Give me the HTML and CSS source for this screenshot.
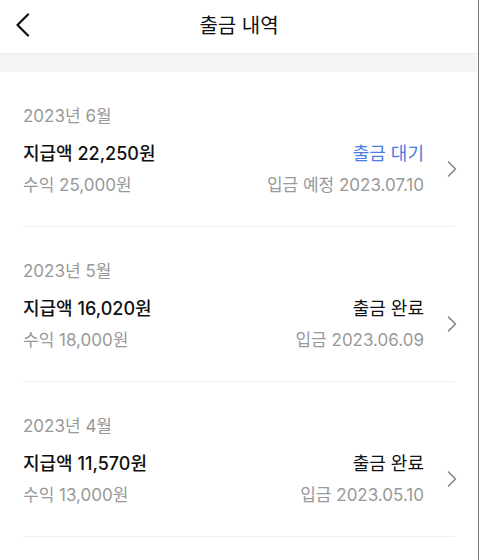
FILE: index.html
```html
<!DOCTYPE html>
<html lang="ko">
<head>
<meta charset="utf-8">
<title>출금 내역</title>
<link rel="stylesheet" href="styles.css">
</head>
<body>
<div class="app">
  <header class="topbar">
    <button class="back" aria-label="뒤로">
      <svg width="16" height="24" viewBox="0 0 16 24"><path d="M13 1.5 L2.5 12 L13 22.5" fill="none" stroke="#111" stroke-width="2.2" stroke-linecap="round" stroke-linejoin="round"/></svg>
    </button>
    <h1 class="title">출금 내역</h1>
  </header>
  <div class="band"></div>
  <ul class="list">
    <li class="item">
      <div class="month">2023년 6월</div>
      <div class="body">
        <div class="cols">
          <div class="row"><span class="amount">지급액 22,250원</span><span class="status pending">출금 대기</span></div>
          <div class="row"><span class="sub">수익 25,000원</span><span class="sub">입금 예정 2023.07.10</span></div>
        </div>
        <svg class="chev" width="12" height="18" viewBox="0 0 12 18"><path d="M2.5 2 L9.5 9 L2.5 16" fill="none" stroke="#8a8a8a" stroke-width="1.7" stroke-linecap="round" stroke-linejoin="round"/></svg>
      </div>
    </li>
    <li class="item">
      <div class="month">2023년 5월</div>
      <div class="body">
        <div class="cols">
          <div class="row"><span class="amount">지급액 16,020원</span><span class="status">출금 완료</span></div>
          <div class="row"><span class="sub">수익 18,000원</span><span class="sub">입금 2023.06.09</span></div>
        </div>
        <svg class="chev" width="12" height="18" viewBox="0 0 12 18"><path d="M2.5 2 L9.5 9 L2.5 16" fill="none" stroke="#8a8a8a" stroke-width="1.7" stroke-linecap="round" stroke-linejoin="round"/></svg>
      </div>
    </li>
    <li class="item">
      <div class="month">2023년 4월</div>
      <div class="body">
        <div class="cols">
          <div class="row"><span class="amount">지급액 11,570원</span><span class="status">출금 완료</span></div>
          <div class="row"><span class="sub">수익 13,000원</span><span class="sub">입금 2023.05.10</span></div>
        </div>
        <svg class="chev" width="12" height="18" viewBox="0 0 12 18"><path d="M2.5 2 L9.5 9 L2.5 16" fill="none" stroke="#8a8a8a" stroke-width="1.7" stroke-linecap="round" stroke-linejoin="round"/></svg>
      </div>
    </li>
  </ul>
</div>
</body>
</html>
```
FILE: styles.css
```css
* { box-sizing: border-box; }
html, body { margin: 0; padding: 0; background: #fff; }
body {
  font-family: Inter, "Noto Sans CJK KR", sans-serif;
  color: #111;
}
.app {
  width: 479px;
  height: 560px;
  border-right: 1px solid #7a7a7a;
  overflow: hidden;
}
.topbar {
  height: 54px;
  display: flex;
  align-items: center;
  justify-content: center;
  position: relative;
  border-bottom: 1px solid #ececec;
}
.back {
  position: absolute;
  left: 15px;
  top: 13px;
  width: 16px;
  height: 24px;
  padding: 0;
  border: 0;
  background: none;
  display: flex;
}
.title {
  margin: 0;
  font-size: 20px;
  font-weight: 400;
  line-height: 26px;
  margin-top: -2px;
}
.band {
  height: 18px;
  background: #f5f5f5;
  margin-right: 1px;
}
.list {
  list-style: none;
  margin: 0;
  padding: 0 23px;
}
.item {
  padding: 32px 0 31px;
  border-bottom: 1px solid #efefef;
}
.month {
  font-size: 17px;
  line-height: 24px;
  color: #999;
}
.body {
  display: flex;
  align-items: center;
  margin-top: 11px;
}
.cols {
  flex: 1;
  display: flex;
  flex-direction: column;
  gap: 6px;
}
.row {
  display: flex;
  justify-content: space-between;
  align-items: center;
}
.row:first-child { height: 26px; }
.row:last-child { height: 24px; }
.amount {
  font-size: 18px;
  font-weight: 500;
  color: #111;
}
.status {
  font-size: 18px;
  font-weight: 400;
  color: #111;
}
.status.pending { color: #4a7ddf; }
.sub {
  font-size: 17px;
  color: #999;
}
.chev {
  margin-left: 22px;
  margin-right: -3px;
  margin-top: 4px;
}
```
